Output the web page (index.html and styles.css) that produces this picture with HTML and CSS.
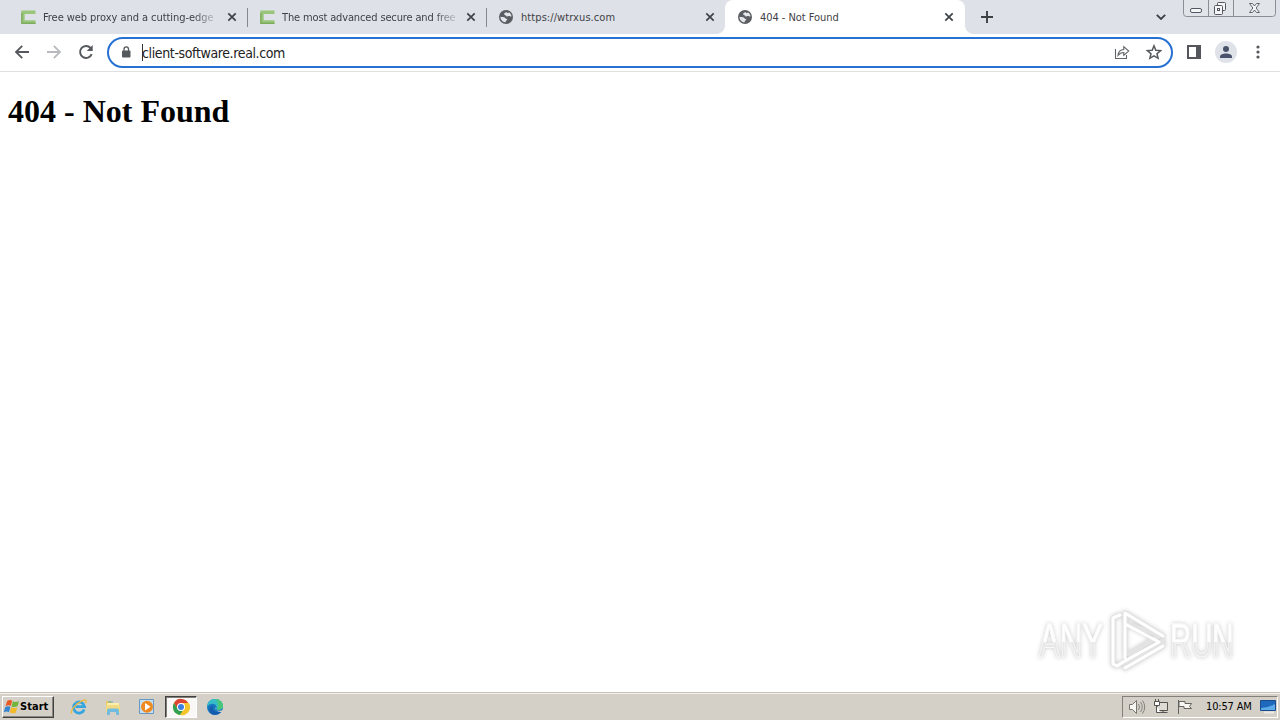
FILE: index.html
```html
<!DOCTYPE html>
<html lang="en">
<head>
<meta charset="utf-8">
<title>404 - Not Found</title>
<link rel="stylesheet" href="styles.css">
</head>
<body>
<svg class="defs" width="0" height="0">
  <symbol id="camp" viewBox="0 0 16 16"><path d="M15.500 3.200H3v9.800H15.500" fill="none" stroke="#9ac67c" stroke-width="3.400"/><path d="M1.900 4v10.200H15.500" fill="none" stroke="#7cac5c" stroke-width="1.400"/></symbol>
  <symbol id="globe" viewBox="0 0 14 14"><circle cx="7" cy="7" r="7" fill="#5a5d61"/><path d="M1.500 6.700C3 7.200 5 6.600 5.800 7.600S7 9 8.400 9.200c-.3 1.500-1.600 1-2 3.200C3.500 12 1.300 9.500 1.500 6.700ZM7 2c.8.2.8.900 1.600 1.100S9.800 2.200 10.300 2.500c1.300.9 2.100 2.300 2.200 4C11 6.800 10.600 5.300 9 6.200 8 6.800 7.300 6.500 7 5.800 6.400 5 5.200 5 5 4.100 5.300 3 6.300 3.300 7 2Z" fill="#e3e6eb"/></symbol>
  <symbol id="close" viewBox="0 0 10 10"><path d="m1.300 1.300 7.400 7.400m0-7.400-7.400 7.400" stroke="#3f4348" stroke-width="1.700"/></symbol>
</svg>
<header class="tabstrip">
  <div class="tab"><svg class="fav camp"><use href="#camp"/></svg><span class="title fade t1">Free web proxy and a cutting-edge</span><svg class="close"><use href="#close"/></svg></div>
  <div class="tab"><svg class="fav camp"><use href="#camp"/></svg><span class="title fade t2">The most advanced secure and free</span><svg class="close"><use href="#close"/></svg></div>
  <div class="tab last"><svg class="fav"><use href="#globe"/></svg><span class="title t3">https://wtrxus.com</span><svg class="close"><use href="#close"/></svg></div>
  <div class="tab active"><svg class="fav"><use href="#globe"/></svg><span class="title t4">404 - Not Found</span><svg class="close"><use href="#close"/></svg></div>
  <svg class="plus" viewBox="0 0 12 12"><path d="M6 0v12M0 6h12" stroke="#3c4043" stroke-width="1.900"/></svg>
  <svg class="chevron" viewBox="0 0 10 6"><path d="m.8.800 4.200 4.200L9.200.8" fill="none" stroke="#3c4043" stroke-width="1.800"/></svg>
  <svg class="winbtns" viewBox="0 0 94 18">
    <path d="M.5 0v13.500q0 3 3 3h86q3 0 3-3V0M25.500 0v16M50.500 0v16" fill="#e1e4e9" stroke="#8b8e94"/>
    <g fill="#f5f6f8" stroke="#53575f"><rect x="7.500" y="8.500" width="11" height="4" rx="1.500"/><rect x="34.500" y="2.500" width="8" height="8" rx="1"/><rect x="31.500" y="5.500" width="8" height="9" rx="1"/><rect x="34.500" y="8.500" width="2" height="2"/></g>
    <path d="M66.500 3.500h3l2 2.500 2-2.500h3l-3.400 4.500 3.400 4.500h-3l-2-2.500-2 2.500h-3l3.400-4.500z" fill="#f5f6f8" stroke="#62666d"/>
  </svg>
</header>
<nav class="toolbar">
  <svg class="nav" viewBox="0 0 16 16"><path d="M15 8H2m6.200-6.200L2 8l6.200 6.200" fill="none" stroke="#55585c" stroke-width="1.800"/></svg>
  <svg class="nav" viewBox="0 0 16 16"><path d="M1 8h13M7.800 1.800 14 8l-6.200 6.200" fill="none" stroke="#b8babd" stroke-width="1.800"/></svg>
  <svg class="nav" viewBox="0 0 16 16"><path d="M13.700 10.100A6 6 0 1 1 12.600 4" fill="none" stroke="#55585c" stroke-width="1.900"/><path d="M14.700 1v6H8.700z" fill="#55585c"/></svg>
  <div class="omnibox">
    <svg class="lock" viewBox="0 0 10 12"><rect x="1" y="4.500" width="8.500" height="7" rx="1" fill="#55585c"/><path d="M3 5V3.200a2.250 2.250 0 0 1 4.500 0V5" fill="none" stroke="#55585c" stroke-width="1.300"/></svg>
    <i class="caret"></i><span class="url">client-software.real.com</span>
    <svg class="share" viewBox="0 0 16 16"><path d="M1.500 5v9.500h11V11M4 11.500C4.300 8 6.300 5.600 9.800 5.500V2.700L14.700 7l-4.900 4.300V8.500C7.300 8.500 5.500 9.500 4 11.500Z" fill="none" stroke="#606367" stroke-width="1.100"/></svg>
    <svg class="star" viewBox="0 0 16 16"><path d="m8 1.800 1.800 4.400 4.800.4-3.600 3.100 1.100 4.600L8 11.900l-4.100 2.400L5 9.700 1.400 6.600l4.800-.4z" fill="none" stroke="#55585c" stroke-width="1.500"/></svg>
  </div>
  <svg class="panel" viewBox="0 0 14 14"><path d="M1 1h12v12H1z" fill="none" stroke="#55565b" stroke-width="2"/><path d="M9 1h4v12H9z" fill="#55565b"/></svg>
  <svg class="avatar" viewBox="0 0 22 22"><circle cx="11" cy="11" r="11" fill="#dfe2e8"/><circle cx="11" cy="8" r="3" fill="#49526a"/><path d="M5 17v-1.300C5 13.500 8 12.400 11 12.400s6 1.100 6 3.300V17z" fill="#49526a"/></svg>
  <svg class="dots" viewBox="0 0 4 14"><g fill="#55585c"><circle cx="2" cy="2" r="1.600"/><circle cx="2" cy="7" r="1.600"/><circle cx="2" cy="12" r="1.600"/></g></svg>
</nav>
<main class="page">
  <h1>404 - Not Found</h1>
  <div class="watermark">
    <span class="any">ANY</span>
    <svg viewBox="0 0 60 64"><g fill="none" stroke-linejoin="round" stroke-linecap="round"><g stroke="#e3e3e3" stroke-width="5"><path d="M13 7 6 10v46l4 2 6-4M18 46V5l38 23-38-12M22 46l30-18M18 60l38-22v-5L16 55"/></g><g stroke="#fff" stroke-width="3"><path d="M13 7 6 10v46l4 2 6-4M18 50V5l38 23M18 16l34 18-34 19M18 60l38-22"/></g></g></svg>
    <span class="run">RUN</span>
  </div>
</main>
<footer class="taskbar">
  <div class="start"><svg viewBox="0 0 18 18"><path d="M4.500 2.500q3-2 5.300 0L8.200 8q-2.300-1.500-5.500 0z" fill="#e85a25"/><path d="M10.500 3q3 1.300 6.500-.3L15.400 8.200q-3.200 1.400-6.400.2z" fill="#73b43c"/><path d="M2.400 8.900q3.200-1.600 5.500 0L6.300 14.500Q4 13 .8 14.500z" fill="#3685d0"/><path d="M8.700 9.300q3.200 1.400 6.400.2L13.500 15q-3.200 1.400-6.300-.2z" fill="#f2b929"/></svg><span>Start</span></div>
  <svg class="app" viewBox="0 0 18 18"><path d="M14.200 11.500A5.500 5.500 0 1 1 14.500 8.700H5.500" fill="none" stroke="#35a5df" stroke-width="2.800"/><path d="M2 15.500C-1 14 6 5 13 2.300c3-1.200 4 0 2.500 2.900" fill="none" stroke="#edb83c" stroke-width="1.300"/></svg>
  <svg class="app" viewBox="0 0 18 18"><path d="M2 3h5l1 2h7v9H2z" fill="#e9c95f"/><path d="M3 5h12v8H3z" fill="#fff0a8"/><path d="M2 7h14v7H2z" fill="#f2d983"/><path d="M3 17v-4.500q0-2 2-2h8q2 0 2 2V17h-3v-3H6v3z" fill="#72bddf"/><path d="M4 4h5" stroke="#5ba7ba"/></svg>
  <svg class="app" viewBox="0 0 18 18"><path d="M1.500 1.500h14v14h-14z" fill="#c6e0f3" stroke="#6798c4"/><circle cx="9" cy="8.700" r="6" fill="#f08a20"/><path d="m7 5 5.500 3.700L7 12.400z" fill="#fff"/></svg>
  <div class="running"><svg class="app" viewBox="0 0 18 18"><circle cx="9" cy="9" r="8" fill="#f4c62b"/><path d="M9 9H17A8 8 0 0 0 2 5l3.600 6z" fill="#dc4435"/><path d="M2 5a8 8 0 0 0 6 12l4-6.200-6.400.2z" fill="#31a052"/><path d="M9 5h7.800a8 8 0 0 1-8.500 12l4-6z" fill="#f4c62b"/><circle cx="9" cy="9" r="4" fill="#fff"/><circle cx="9" cy="9" r="3" fill="#3c7fe3"/></svg></div>
  <svg class="app edge" viewBox="0 0 18 18"><circle cx="9" cy="9" r="8" fill="#1675bf"/><path d="M1 9C1.500 3.500 5 1 9 1c5 0 8 3.500 8 7 0 3-2.500 4-5.500 3.700C9 11.400 11 10 10.500 8.300 9.500 5 4 4.500 1 9z" fill="#37bdc8"/><path d="M9 1c5 0 8 3.500 8 7 0 3-2.500 4-5.500 3.700C11 9 14 5 9 1z" fill="#48c779"/><path d="M7 8c-1.500 4 2 7 8 5.500-2 3-6 4-9 2.700C2 13.500 3 9 7 8z" fill="#155cae"/><path d="M10 9c-1 1-1 3 2 3.700 2 .4 4-.2 6-1.200v2c-6 1.500-9-1-8-4.500z" fill="#d4d0c8"/></svg>
  <div class="tray">
    <svg class="speaker" viewBox="0 0 18 16"><path d="M1.500 5.500h3l4-4v13l-4-4h-3z" fill="#f7f6f2" stroke="#77756f"/><path d="M10.500 5q2 3 0 6M12.500 3q3.500 5 0 10M14.500 1.500q4.500 6.500 0 13" fill="none" stroke="#85827b"/></svg>
    <svg class="net" viewBox="0 0 16 16"><path d="M4.500 3.500h10v8h-10zM6.500 13.500h8M10 12v2" fill="#dedbd4" stroke="#55534e"/><path d="M1.500 2.500h5v4h-5zM2.500 0v3M5.500 0v3M3.500 6v7.500h4" fill="#fff" stroke="#55534e"/></svg>
    <svg class="flag" viewBox="0 0 16 16"><path d="M1.500 1v14M2 2.500h6v2h6.500l-2 3 2 2H7v-2H2z" fill="#f7f6f2" stroke="#65635e"/></svg>
    <span class="clock">10:57 AM</span>
    <svg class="desk" viewBox="0 0 16 14"><path d="M.5.500h15v10H.5z" fill="#1e68bd" stroke="#194d8e"/><path d="M1 8Q8 8 15 4v6H1z" fill="#5caae7"/><path d="M4 12.500h10" stroke="#ece9e2" stroke-width="2"/></svg>
  </div>
</footer>
</body>
</html>
```
FILE: styles.css
```css
* { box-sizing: border-box; }
body { margin: 0; width: 1280px; height: 720px; overflow: hidden; display: flex; flex-direction: column; background: #fff; font-family: "DejaVu Sans Condensed", "DejaVu Sans", sans-serif; font-stretch: condensed; }
svg { display: block; flex: none; }
.defs { position: absolute; }
.tabstrip { height: 34px; flex: none; display: flex; background: #dee1e8; padding-left: 9px; }
.tab { width: 239px; height: 34px; flex: none; display: flex; align-items: center; padding: 0 11px 0 12px; position: relative; }
.tab:not(.last):not(.active)::after { content: ""; position: absolute; right: 0; top: 8px; width: 1px; height: 19px; background: #85888e; }
.fav { width: 14px; height: 14px; margin-right: 8px; }
.fav.camp { width: 16px; height: 16px; margin: 0 7px 0 -1px; }
.title { font-size: 11px; line-height: 14px; padding-top: 1px; color: #3f4246; white-space: nowrap; }
.fade { width: 171px; overflow: hidden; -webkit-mask-image: linear-gradient(90deg, #000 88%, #0003 100%); mask-image: linear-gradient(90deg, #000 88%, #0003 100%); }
.t1 { letter-spacing: -.06px; }
.t2 { letter-spacing: -.14px; width: 173px; }
.t3 { letter-spacing: .08px; }
.t4 { letter-spacing: -.05px; }
.close { width: 10px; height: 10px; margin-left: auto; }
.tab.last { width: 238px; padding-right: 10px; }
.active { width: 240px; padding: 0 11px 0 13px; background: #fff; border-radius: 8px 8px 0 0; }
.active::before, .active::after { content: ""; position: absolute; bottom: 0; width: 8px; height: 8px; }
.active::before { left: -8px; background: radial-gradient(circle at 0 0, transparent 7.5px, #fff 8px); }
.active::after { right: -8px; background: radial-gradient(circle at 100% 0, transparent 7.5px, #fff 8px); }
.plus { width: 12px; height: 12px; margin: 11px 0 0 16px; }
.chevron { width: 10px; height: 6px; margin: 14px 0 0 auto; }
.winbtns { width: 94px; height: 18px; margin: 0 3px 0 17px; }
.toolbar { height: 38px; flex: none; display: flex; align-items: center; padding: 0 20px 1px 14px; border-bottom: 1px solid #dfdfe2; }
.nav { width: 16px; height: 16px; margin-right: 16px; }
.nav:nth-child(3) { margin-right: 13px; }
.omnibox { width: 1066px; height: 31px; flex: none; display: flex; align-items: center; padding: 0 9px 0 12px; border: 2px solid #2671d2; border-radius: 16px; }
.lock { width: 10px; height: 12px; }
.caret { width: 1px; height: 17px; background: #333; margin-left: 11px; }
.url { font-size: 14px; line-height: 18px; padding-top: 1px; margin-left: -1px; letter-spacing: -.37px; color: #222; white-space: nowrap; }
.share { width: 16px; height: 16px; margin-left: auto; }
.star { width: 16px; height: 16px; margin-left: 16px; }
.panel { width: 14px; height: 14px; margin-left: 14px; }
.avatar { width: 22px; height: 22px; margin-left: 14px; }
.dots { width: 4px; height: 14px; margin-left: auto; }
.page { flex: 1; position: relative; padding: 0 8px; overflow: hidden; }
.page h1 { margin: 21px 0 0; font: bold 32px/37px "Liberation Serif", serif; color: #000; white-space: nowrap; }
.watermark { position: absolute; left: 1039px; top: 536px; width: 194px; height: 66px; display: flex; align-items: center; justify-content: space-between; filter: drop-shadow(0 0 2px #ccc); }
.watermark svg { width: 60px; height: 64px; margin-top: -2px; }
.watermark span { flex: none; font: 48px/48px "Liberation Sans", sans-serif; color: transparent; background: linear-gradient(#fff 52%, #e8e8e8 52%); -webkit-background-clip: text; background-clip: text; -webkit-text-stroke: 1px #f8f8f8; transform-origin: left; white-space: nowrap; }
.watermark .any { width: 100px; margin-right: -36px; transform: scaleX(.65); }
.watermark .run { width: 106px; margin-right: -43px; transform: scaleX(.61); }
.taskbar { height: 28px; flex: none; display: flex; align-items: center; background: #d4d0c8; border-top: 1px solid #c4c1bb; box-shadow: inset 0 1px #f3f1ec; padding: 1px 2px 1px 2px; }
.start { width: 52px; height: 22px; flex: none; display: flex; align-items: center; margin-right: 16px; border: 1px solid; border-color: #fff #404040 #404040 #fff; box-shadow: inset -1px -1px #89867f; font-size: 11px; font-weight: bold; color: #000; }
.start svg { width: 17px; height: 18px; }
.start span { letter-spacing: .05px; white-space: nowrap; }
.app { width: 18px; height: 18px; margin-right: 16px; }
.running { width: 32px; height: 22px; flex: none; display: flex; align-items: center; justify-content: center; margin: 0 9px 0 -7px; background: #f9f8f6; border: 1px solid; border-color: #404040 #fff #fff #404040; box-shadow: inset 1px 1px #807d77; }
.running .app { margin: 0; }
.tray { width: 156px; height: 22px; flex: none; display: flex; align-items: center; margin-left: auto; padding: 0 1px 0 5px; border: 1px solid; border-color: #84817b #fff #fff #84817b; }
.speaker { width: 18px; height: 16px; }
.net { width: 16px; height: 16px; margin-left: 7px; }
.flag { width: 16px; height: 16px; margin-left: 8px; }
.clock { font-size: 11px; letter-spacing: -.15px; color: #000; white-space: nowrap; margin-left: 13px; }
.desk { width: 16px; height: 14px; margin-left: auto; }
```
